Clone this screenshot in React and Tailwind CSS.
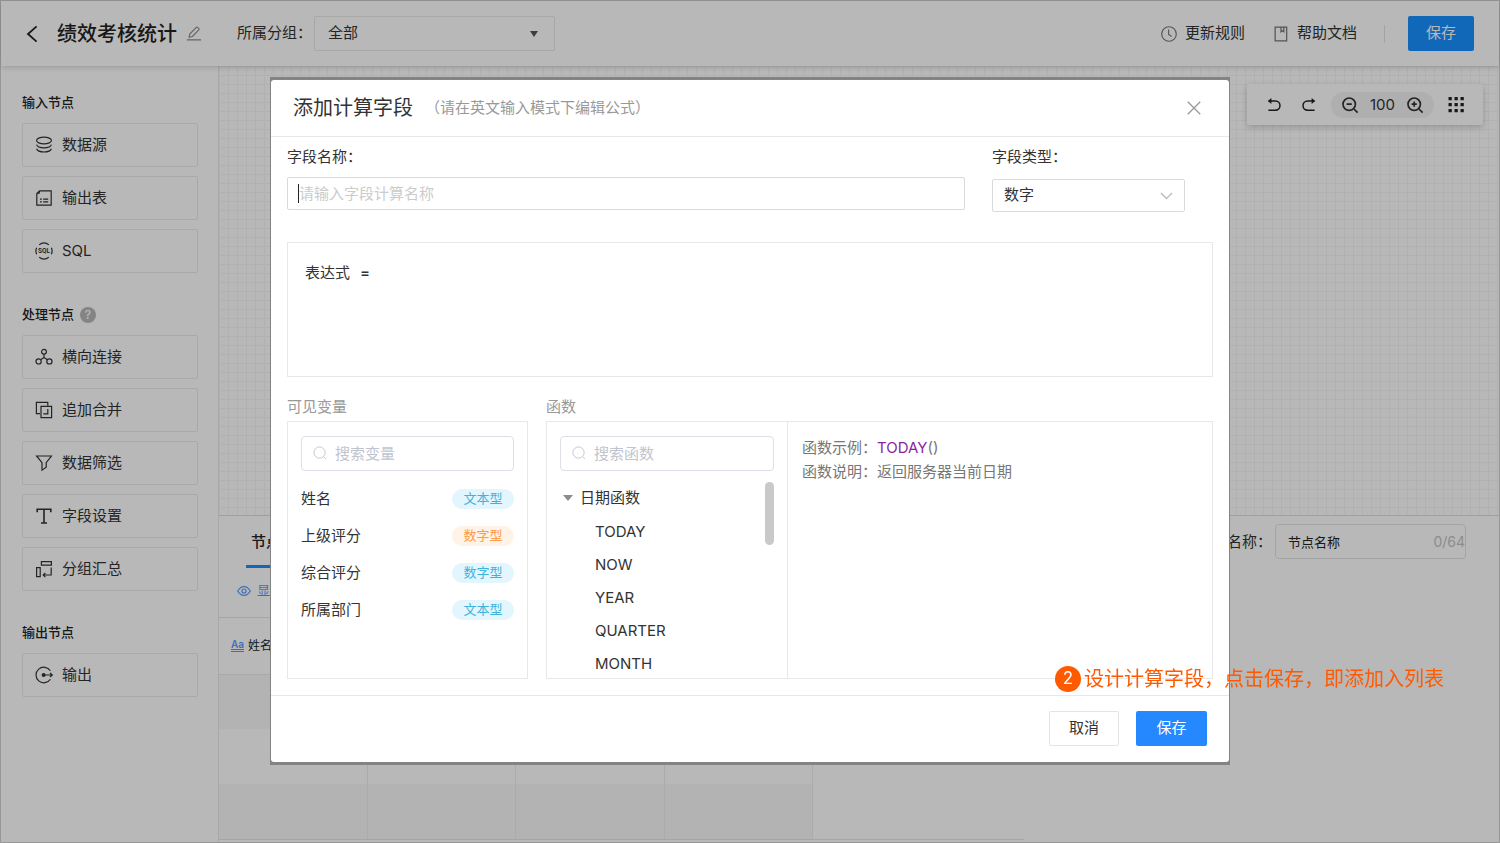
import React, { useState } from "react";

const Icon = ({ size = 18, children, className = "", sw = 1.2, box = 18 }) => (
  <svg
    width={size}
    height={size}
    viewBox={`0 0 ${box} ${box}`}
    fill="none"
    stroke="currentColor"
    strokeWidth={sw}
    className={`shrink-0 ${className}`}
    aria-hidden="true"
  >
    {children}
  </svg>
);

const icons = {
  source: (
    <>
      <ellipse cx="9" cy="4.5" rx="7.4" ry="3.3" />
      <path d="M1.6 8.6c.6 1.9 3.6 3.2 7.4 3.2s6.8-1.3 7.4-3.2M1.6 12.8c.6 1.9 3.6 3.2 7.4 3.2s6.8-1.3 7.4-3.2" />
    </>
  ),
  table: (
    <>
      <path d="M4.6 1.8h11.6v14.4H1.8V4.6z" />
      <path d="M2 4.2h2.2V2M5 10.2h1.8M8.2 10.2h5M5 12.8h1.8M8.2 12.8h5" />
    </>
  ),
  sql: (
    <>
      <path d="M4.2 2.7a8 8 0 0 1 9.6 0M4.2 15.3a8 8 0 0 0 9.6 0M1.6 5.8a8 8 0 0 0 0 6.4M16.4 5.8a8 8 0 0 1 0 6.4" />
      <text
        x="9"
        y="11.4"
        textAnchor="middle"
        fontSize="6.5"
        fontWeight="700"
        fontFamily="Roboto, sans-serif"
        fill="currentColor"
        stroke="none"
      >
        SQL
      </text>
    </>
  ),
  join: (
    <>
      <circle cx="9" cy="3.8" r="2.4" />
      <circle cx="3.6" cy="13.4" r="2.6" />
      <circle cx="14.4" cy="13.4" r="2.6" />
      <path d="M9 6.2v3.8M9 9.6l-3.4 2.2M9 9.6l3.4 2.2" />
    </>
  ),
  union: (
    <>
      <path d="M5 12.6H1.4V1.4h11.4v3.4" />
      <path d="M6 5.4h10.6v11.2H6z" />
      <path d="M12.8 8v4.8H8.4" />
    </>
  ),
  filter: <path d="M1.6 2h14.8l-5.2 6.6v4.6L7 16.2V8.6z" />,
  text: <path d="M2.2 5.2V2.2h13.6v3M9 2.2v13.8M6 16h6" strokeWidth="1.6" />,
  group: (
    <>
      <path d="M6.4 1.6h10v3.6h-10zM1.6 7.6h3.6v9H1.6z" />
      <path d="M16.2 7.6v7.4H8.4M10.4 12.8L8.2 15l2.2 2.2" />
    </>
  ),
  output: (
    <>
      <path d="M15.4 4.8a7.8 7.8 0 1 0 0 8.4" />
      <path d="M8.4 9h9M15 7l2.4 2L15 11" />
      <circle cx="8.6" cy="9" r="2" fill="currentColor" stroke="none" />
    </>
  ),
};

const nodeGroups = [
  {
    title: "输入节点",
    items: [
      { icon: "source", label: "数据源" },
      { icon: "table", label: "输出表" },
      { icon: "sql", label: "SQL" },
    ],
  },
  {
    title: "处理节点",
    help: true,
    items: [
      { icon: "join", label: "横向连接" },
      { icon: "union", label: "追加合并" },
      { icon: "filter", label: "数据筛选" },
      { icon: "text", label: "字段设置" },
      { icon: "group", label: "分组汇总" },
    ],
  },
  { title: "输出节点", items: [{ icon: "output", label: "输出" }] },
];

const variables = [
  { name: "姓名", type: "文本型", tone: "blue" },
  { name: "上级评分", type: "数字型", tone: "orange" },
  { name: "综合评分", type: "数字型", tone: "blue" },
  { name: "所属部门", type: "文本型", tone: "blue" },
];

const functions = ["TODAY", "NOW", "YEAR", "QUARTER", "MONTH"];

const tones = {
  blue: "bg-[#e3f6fe] text-[#3fb3dc]",
  orange: "bg-[#fff3e8] text-[#ff9a47]",
};

function Header() {
  return (
    <header className="relative z-10 flex h-[65px] shrink-0 items-center bg-white pl-[23px] pr-[25px] shadow-[0_1px_6px_rgba(0,0,0,0.18)]">
      <button aria-label="返回" className="text-[#222]">
        <Icon sw={1.8}>
          <path d="M12.6 1.4L4 9l8.6 7.6" />
        </Icon>
      </button>
      <h1 className="ml-[15px] text-xl font-medium text-[#222]">绩效考核统计</h1>
      <button aria-label="重命名" className="ml-[9px] text-[#8c8c8c]">
        <Icon size={16} sw={1.3}>
          <path d="M1 15.6h16M3.6 12.6l.6-3.6L11.6 1.6a1 1 0 0 1 1.4 0l1.4 1.4a1 1 0 0 1 0 1.4L7.2 11.8z" />
        </Icon>
      </button>
      <label htmlFor="group" className="ml-[35px] text-[15px] text-[#333]">
        所属分组：
      </label>
      <div className="relative ml-[2px] w-[241px]">
        <select
          id="group"
          className="h-[35px] w-full appearance-none rounded-xs border border-[#e9e9e9] bg-white pl-[13px] text-[15px] text-[#333]"
        >
          <option>全部</option>
        </select>
        <svg width="8" height="6" viewBox="0 0 8 6" className="pointer-events-none absolute right-[17px] top-[15px] text-[#555]">
          <path d="M0 0h8L4 6z" fill="currentColor" />
        </svg>
      </div>
      <div className="ml-auto flex items-center text-[15px] text-[#333]">
        <button className="flex items-center gap-2">
          <Icon size={16} className="text-[#777]" sw={1.3}>
            <circle cx="9" cy="9" r="8.2" />
            <path d="M8.6 4v5.6l3.4 2.2" />
          </Icon>
          更新规则
        </button>
        <button className="ml-7 flex items-center gap-2">
          <Icon size={16} className="text-[#777]" sw={1.4}>
            <path d="M2.4 1.2h13v15.6h-13zM9 1.4v5.2l1.6-1.2 1.6 1.2V1.4" />
          </Icon>
          帮助文档
        </button>
        <span className="ml-[27px] h-[18px] w-px bg-[#e2e2e2]" />
        <button className="ml-[23px] h-[35px] w-[66px] rounded-xs bg-[#1890ff] text-white">保存</button>
      </div>
    </header>
  );
}

function Sidebar() {
  return (
    <aside className="flex w-[218px] shrink-0 flex-col gap-8 border-r border-[#eaeaea] bg-white pl-[21px] pr-5 pt-[27px]">
      {nodeGroups.map((group) => (
        <section key={group.title}>
          <h2 className="flex h-5 items-center gap-[6px] text-[13px] font-medium text-[#222]">
            {group.title}
            {group.help && (
              <span className="flex h-4 w-4 items-center justify-center rounded-full bg-[#b8b8b8] text-[12px] text-white">
                ?
              </span>
            )}
          </h2>
          <div className="mt-[10px] flex flex-col gap-[9px]">
            {group.items.map((item) => (
              <button
                key={item.label}
                className="flex h-11 w-full items-center gap-[9px] rounded-xs border border-[#eaeaea] pl-3 text-[15px] text-[#333]"
              >
                <Icon>{icons[item.icon]}</Icon>
                {item.label}
              </button>
            ))}
          </div>
        </section>
      ))}
    </aside>
  );
}

function Toolbar() {
  return (
    <div className="absolute right-4 top-[18px] flex h-[41px] w-[236px] items-center rounded-xs bg-white pl-[18px] pr-[19px] text-[#222] shadow-[0_2px_6px_rgba(0,0,0,0.2)]">
      <button aria-label="撤销">
        <Icon sw={1.5}>
          <path d="M3.6 5h6.8a4.6 4.6 0 0 1 0 9.2H3.4" />
          <path d="M6.4 2v6L2.8 5z" fill="currentColor" stroke="none" />
        </Icon>
      </button>
      <button aria-label="重做" className="ml-[17px]">
        <Icon sw={1.5}>
          <path d="M14.4 5H7.6a4.6 4.6 0 0 0 0 9.2h7" />
          <path d="M11.6 2v6l3.6-3z" fill="currentColor" stroke="none" />
        </Icon>
      </button>
      <div className="ml-[13px] flex h-[26px] w-[103px] shrink-0 items-center justify-between rounded-full bg-[#f3f3f3] px-[10px] text-[15px] text-[#333]">
        <button aria-label="缩小">
          <Icon sw={1.7}>
            <path d="M13 13l3.6 3.6M5.6 8.2h5.2" />
            <circle cx="8.2" cy="8.2" r="6.2" />
          </Icon>
        </button>
        <span className="pt-[2px]">100</span>
        <button aria-label="放大">
          <Icon sw={1.7}>
            <path d="M13 13l3.6 3.6M5.6 8.2h5.2M8.2 5.6v5.2" />
            <circle cx="8.2" cy="8.2" r="6.2" />
          </Icon>
        </button>
      </div>
      <button aria-label="网格" className="ml-auto">
        <svg width="16" height="16" viewBox="0 0 16 16" fill="currentColor">
          {[0, 6, 12].map((y) =>
            [0, 6, 12].map((x) => <rect key={`${x}-${y}`} x={x + 0.5} y={y} width="3.3" height="3.3" rx="0.5" />)
          )}
        </svg>
      </button>
    </div>
  );
}

function NodePanel() {
  return (
    <section className="flex h-[327px] shrink-0 border-t border-[#dcdcdc] bg-white">
      <div className="min-w-0 flex-1">
        <div className="flex h-[52px] pl-[27px]">
          <button className="h-full w-[80px] border-b-3 border-[#1890ff] pl-[5px] pt-[3px] text-left text-[15px] font-medium text-[#222]">
            节点
          </button>
        </div>
        <div className="flex h-[49px] items-center pb-1 pl-[18px] text-[13px] text-[#539cff]">
          <a href="#fields" className="flex items-center gap-[6px]">
            <Icon size={14} sw={1.5}>
              <path d="M1 9c2-3.8 4.8-5.6 8-5.6S15 5.2 17 9c-2 3.8-4.8 5.6-8 5.6S3 12.8 1 9z" />
              <circle cx="9" cy="9" r="2.6" />
            </Icon>
            显
          </a>
        </div>
        <div className="border-y border-[#e6e6e6]">
          <table className="w-[594px] table-fixed border-collapse">
            <thead>
              <tr className="h-14 border-b border-[#eaeaea]">
                <th className="pl-3 text-left text-[12px] font-normal text-[#222]">
                  <span className="flex items-center gap-1">
                    <span className="border-b-3 border-double border-[#539cff] text-[10px] font-semibold leading-[10px] text-[#539cff]">
                      Aa
                    </span>
                    姓名
                  </span>
                </th>
                <th />
                <th />
                <th />
              </tr>
            </thead>
            <tbody>
              {[0, 1, 2].map((row) => (
                <tr key={row} className="h-[55px] odd:bg-[#f9f9f9]">
                  {[0, 1, 2, 3].map((col) => (
                    <td key={col} className="border-r border-[#eeeeee]" />
                  ))}
                </tr>
              ))}
            </tbody>
          </table>
        </div>
      </div>
      <div className="flex w-[475px] items-start justify-end pr-[33px] pt-2">
        <label htmlFor="nodeName" className="text-[15px] leading-[35px] text-[#333]">
          节点名称：
        </label>
        <div className="relative ml-[3px] w-[191px]">
          <input
            id="nodeName"
            defaultValue="节点名称"
            className="h-[35px] w-full rounded border border-[#e4e4e4] bg-white pl-3 text-[13px] text-[#222]"
          />
          <span className="absolute right-px top-2 text-[14px] leading-5 text-[#c4c4c4]">0/64</span>
        </div>
      </div>
    </section>
  );
}

function SearchBox({ id, label }) {
  return (
    <div className="relative">
      <input
        id={id}
        aria-label={label}
        placeholder={label}
        className="h-[35px] w-full rounded border border-[#dcdfe6] pl-[33px] text-[15px] placeholder:text-[#bfc4cf]"
      />
      <Icon size={14} className="absolute left-3 top-[10px] text-[#bfc4cf]">
        <circle cx="8.4" cy="8.4" r="7.2" />
        <path d="M13.6 13.6l3 3" />
      </Icon>
    </div>
  );
}

function FieldModal() {
  const [name, setName] = useState("");
  const [formula, setFormula] = useState("");

  return (
    <div className="fixed inset-0 z-20 flex items-center justify-center bg-black/28 pb-[2px]">
      <div className="relative w-[960px] bg-[#838383] px-px py-[3px]">
        <div role="dialog" aria-label="添加计算字段" className="rounded-[3px] bg-white text-[15px] text-[#333]">
          <div className="flex h-[57px] items-center border-b border-[#e8e8e8] pl-[22px] pr-7">
            <h2 className="text-xl">添加计算字段</h2>
            <span className="ml-3 pt-[2px] text-[#999]">（请在英文输入模式下编辑公式）</span>
            <button aria-label="关闭" className="ml-auto text-[#999]">
              <Icon size={14} sw={1.7}>
                <path d="M1 1l16 16M17 1L1 17" />
              </Icon>
            </button>
          </div>

          <div className="px-4 pb-4 pt-[10px]">
            <div className="flex gap-[27px] pr-7">
              <div className="flex-1">
                <label htmlFor="fieldName" className="block leading-5">
                  字段名称：
                </label>
                <div className="relative mt-[10px]">
                  <input
                    id="fieldName"
                    value={name}
                    onChange={(e) => setName(e.target.value)}
                    placeholder="请输入字段计算名称"
                    className="block h-[33px] w-full rounded-xs border border-[#d9d9d9] px-[11px] placeholder:text-[#ccc]"
                  />
                  <span className="absolute left-[11px] top-[7px] h-[19px] w-px bg-[#222]" />
                </div>
              </div>
              <div className="w-[193px]">
                <label htmlFor="fieldType" className="block leading-5">
                  字段类型：
                </label>
                <div className="relative mt-3">
                  <select
                    id="fieldType"
                    className="block h-[33px] w-full appearance-none rounded-xs border border-[#d9d9d9] bg-white px-[11px]"
                  >
                    <option>数字</option>
                  </select>
                  <svg
                    width="13"
                    height="8"
                    viewBox="0 0 13 8"
                    fill="none"
                    stroke="#bbb"
                    strokeWidth="1.4"
                    className="pointer-events-none absolute right-3 top-[13px]"
                  >
                    <path d="M1 1l5.5 5.6L12 1" />
                  </svg>
                </div>
              </div>
            </div>

            <div className="mt-[30px] flex h-[135px] gap-[10px] border border-[#e8e8e8] px-[17px] py-5">
              <label htmlFor="formula" className="flex gap-[10px] leading-5">
                表达式 <span className="font-medium">=</span>
              </label>
              <textarea
                id="formula"
                value={formula}
                onChange={(e) => setFormula(e.target.value)}
                className="flex-1 resize-none leading-5 outline-none"
              />
            </div>

            <div className="mt-5 flex gap-[18px]">
              <div className="w-[241px]">
                <h3 className="leading-5 text-[#999]">可见变量</h3>
                <div className="mt-1 h-[258px] border border-[#e8e8e8] px-[13px] pt-[14px]">
                  <SearchBox id="searchVariable" label="搜索变量" />
                  <ul className="mt-[10px]">
                    {variables.map((v) => (
                      <li key={v.name} className="flex h-[37px] items-center justify-between">
                        {v.name}
                        <span
                          className={`h-5 w-[62px] rounded-full text-center text-[13px] leading-[18px] ${tones[v.tone]}`}
                        >
                          {v.type}
                        </span>
                      </li>
                    ))}
                  </ul>
                </div>
              </div>

              <div className="flex-1">
                <h3 className="leading-5 text-[#999]">函数</h3>
                <div className="mt-1 flex h-[258px] border border-[#e8e8e8]">
                  <div className="flex w-[241px] flex-col border-r border-[#e8e8e8] px-[13px] pt-[14px]">
                    <SearchBox id="searchFunction" label="搜索函数" />
                    <div className="relative mt-[11px] min-h-0 flex-1 overflow-hidden">
                      <button className="flex h-[33px] items-center gap-[7px] pl-[3px]">
                        <svg width="10" height="6" viewBox="0 0 10 6" fill="#8c8c8c">
                          <path d="M0 0h10L5 6z" />
                        </svg>
                        日期函数
                      </button>
                      <ul className="pl-[35px]">
                        {functions.map((fn) => (
                          <li key={fn} className="h-[33px] leading-[33px]">
                            {fn}
                          </li>
                        ))}
                      </ul>
                      <span className="absolute right-0 top-0 h-[63px] w-[9px] rounded-full bg-[#c9c9c9]" />
                    </div>
                  </div>
                  <div className="flex-1 px-[14px] pt-[14px] leading-6 text-[#777]">
                    <p>
                      函数示例：<span className="text-[#8b1fa0]">TODAY</span>()
                    </p>
                    <p>函数说明：返回服务器当前日期</p>
                  </div>
                </div>
              </div>
            </div>
          </div>

          <div className="flex h-[67px] items-center justify-end gap-[17px] border-t border-[#e8e8e8] pr-[22px]">
            <button className="h-[35px] w-[70px] rounded-xs border border-[#e4e4e4]">取消</button>
            <button className="h-[35px] w-[71px] rounded-xs bg-[#2688ff] text-white">保存</button>
          </div>
        </div>

        <div className="absolute left-[785px] top-[588px] flex items-center gap-[3px] whitespace-nowrap text-xl text-[#ff5a00]">
          <span className="flex h-[26px] w-[26px] items-center justify-center rounded-full bg-[#ff5a00] text-[17px] text-white">
            2
          </span>
          设计计算字段，点击保存，即添加入列表
        </div>
      </div>
    </div>
  );
}

export default function App() {
  return (
    <div className="flex min-h-screen flex-col border border-[#d2d2d2] bg-white font-[Inter,'Noto_Sans_CJK_SC',sans-serif]">
      <Header />
      <div className="flex flex-1">
        <Sidebar />
        <main className="flex min-w-0 flex-1 flex-col">
          <div className="relative flex-1 bg-[linear-gradient(#f5f5f5_1px,transparent_1px),linear-gradient(90deg,#f5f5f5_1px,transparent_1px)] bg-[size:9px_9px]">
            <Toolbar />
          </div>
          <NodePanel />
        </main>
      </div>
      <FieldModal />
    </div>
  );
}
